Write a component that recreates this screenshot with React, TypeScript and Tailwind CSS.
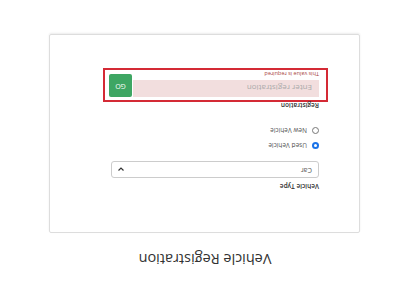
import React from 'react';

const App: React.FC = () => {
  return (
    <div className="w-[400px] h-[300px] bg-white overflow-hidden">
      <div className="w-[400px] h-[300px] rotate-180 flex flex-col font-['Open_Sans',sans-serif] text-[#333]">
        <h1 className="pt-[32px] h-[67px] text-center text-[14.5px] leading-[18px] text-[#333] pr-[10px]">Vehicle Registration</h1>

        <div className="ml-[40px] w-[311px] h-[199px] border border-[#ddd] rounded-[2px] shadow-[0_1px_2px_rgba(0,0,0,0.08)] pl-[40px] pt-[41px]">
          <label className="block text-[6.5px] font-semibold leading-[9px] text-[#333]">Vehicle Type</label>
          <div className="mt-[4px] w-[208px] h-[17px] border border-[#ccc] rounded-[3px] flex items-center justify-between px-[6px] text-[7px] text-[#555]">
            <span>Car</span>
            <svg width="6" height="4" viewBox="0 0 6 4"><path d="M0.5 0.5 L3 3 L5.5 0.5" fill="none" stroke="#333" strokeWidth="1.2" /></svg>
          </div>

          <div className="mt-[12px] flex flex-col gap-[8px] text-[6.5px] text-[#555]">
            <label className="flex items-center gap-[5px] h-[7px]">
              <span className="w-[7px] h-[7px] rounded-full bg-[#1a73e8] flex items-center justify-center">
                <span className="w-[3px] h-[3px] rounded-full bg-white" />
              </span>
              Used Vehicle
            </label>
            <label className="flex items-center gap-[5px] h-[7px]">
              <span className="w-[7px] h-[7px] rounded-full border border-[#777] bg-white" />
              New Vehicle
            </label>
          </div>

          <label className="block mt-[17px] text-[6.5px] font-semibold leading-[9px] text-[#333]">Registration</label>

          <div className="-ml-[9px] -mt-[1px] w-[225px] h-[34px] border-2 border-[#d42a35] pl-[7px] pt-[3px] flex gap-[1px]">
            <div className="w-[186px] flex flex-col">
              <div className="h-[17px] bg-[#f2dede] flex items-center px-[7px] text-[8px] text-[#aaa]">Enter registration</div>
              <div className="mt-[3px] text-[5.5px] leading-[7px] text-[#a94442]">This value is required</div>
            </div>
            <button className="w-[23px] h-[23px] bg-[#3ea663] rounded-[2px] text-white text-[7px] flex items-center justify-center">GO</button>
          </div>
        </div>
      </div>
    </div>
  );
};

export default App;
